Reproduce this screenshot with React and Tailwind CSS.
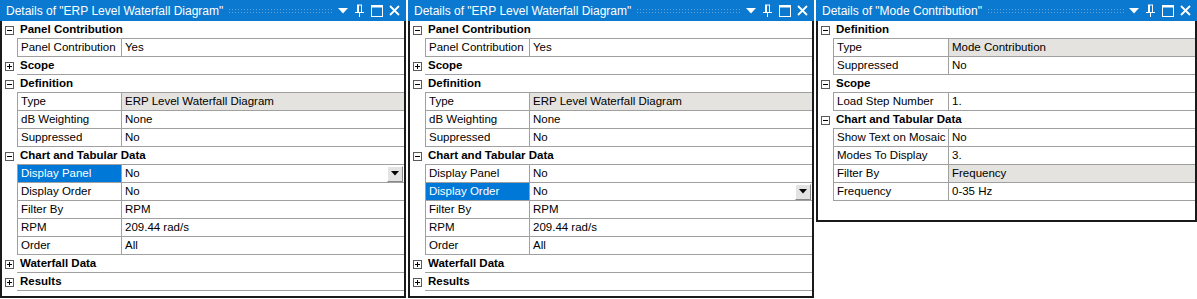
import React from 'react';

const FONT = { fontFamily: '"Liberation Sans", Arial, sans-serif' };

const panels = [
  {
    title: 'Details of "ERP Level Waterfall Diagram"',
    width: 'w-[406px]',
    height: 'h-[298px]',
    nameWidth: 'w-[105px]',
    rows: [
      { h: 'Panel Contribution', open: true },
      { n: 'Panel Contribution', v: 'Yes' },
      { h: 'Scope', open: false },
      { h: 'Definition', open: true },
      { n: 'Type', v: 'ERP Level Waterfall Diagram', gray: true },
      { n: 'dB Weighting', v: 'None' },
      { n: 'Suppressed', v: 'No' },
      { h: 'Chart and Tabular Data', open: true },
      { n: 'Display Panel', v: 'No', selected: true },
      { n: 'Display Order', v: 'No' },
      { n: 'Filter By', v: 'RPM' },
      { n: 'RPM', v: '209.44 rad/s' },
      { n: 'Order', v: 'All' },
      { h: 'Waterfall Data', open: false },
      { h: 'Results', open: false },
    ],
  },
  {
    title: 'Details of "ERP Level Waterfall Diagram"',
    width: 'w-[406px]',
    height: 'h-[298px]',
    nameWidth: 'w-[105px]',
    rows: [
      { h: 'Panel Contribution', open: true },
      { n: 'Panel Contribution', v: 'Yes' },
      { h: 'Scope', open: false },
      { h: 'Definition', open: true },
      { n: 'Type', v: 'ERP Level Waterfall Diagram', gray: true },
      { n: 'dB Weighting', v: 'None' },
      { n: 'Suppressed', v: 'No' },
      { h: 'Chart and Tabular Data', open: true },
      { n: 'Display Panel', v: 'No' },
      { n: 'Display Order', v: 'No', selected: true },
      { n: 'Filter By', v: 'RPM' },
      { n: 'RPM', v: '209.44 rad/s' },
      { n: 'Order', v: 'All' },
      { h: 'Waterfall Data', open: false },
      { h: 'Results', open: false },
    ],
  },
  {
    title: 'Details of "Mode Contribution"',
    width: 'w-[381px]',
    height: 'h-[222px]',
    nameWidth: 'w-[116px]',
    rows: [
      { h: 'Definition', open: true },
      { n: 'Type', v: 'Mode Contribution', gray: true },
      { n: 'Suppressed', v: 'No' },
      { h: 'Scope', open: true },
      { n: 'Load Step Number', v: '1.' },
      { h: 'Chart and Tabular Data', open: true },
      { n: 'Show Text on Mosaic', v: 'No' },
      { n: 'Modes To Display', v: '3.' },
      { n: 'Filter By', v: 'Frequency', gray: true },
      { n: 'Frequency', v: '0-35 Hz' },
    ],
  },
];

function ExpandBox({ open }) {
  return (
    <svg width="9" height="9" viewBox="0 0 9 9" className="block">
      <rect x="0.5" y="0.5" width="8" height="8" fill="#fff" stroke="#5a5a5a" />
      <line x1="2" y1="4.5" x2="7" y2="4.5" stroke="#000" />
      {!open && <line x1="4.5" y1="2" x2="4.5" y2="7" stroke="#000" />}
    </svg>
  );
}

function TitleIcons() {
  return (
    <div className="flex items-center gap-[6px] pr-[6px]">
      <svg width="10" height="6" viewBox="0 0 10 6">
        <path d="M0 0 H10 L5 5.5 Z" fill="#fff" />
      </svg>
      <svg width="11" height="13" viewBox="0 0 11 13">
        <path d="M3 1 H8 M3.5 1 V8 M7.5 1 V8 M4.5 1 V8 M1 8.5 H10 M5.5 8.5 V13" stroke="#fff" strokeWidth="1" fill="none" />
      </svg>
      <svg width="12" height="12" viewBox="0 0 12 12">
        <rect x="0.5" y="0.5" width="11" height="11" fill="none" stroke="#fff" />
        <line x1="0" y1="1.5" x2="12" y2="1.5" stroke="#fff" strokeWidth="2" />
      </svg>
      <svg width="11" height="11" viewBox="0 0 11 11">
        <path d="M1 1 L10 10 M10 1 L1 10" stroke="#fff" strokeWidth="1.8" />
      </svg>
    </div>
  );
}

function DropButton() {
  return (
    <div className="w-[16px] h-[16px] mr-[1px] shrink-0 flex items-center justify-center bg-[#e3e3e3] border border-t-white border-l-white border-r-[#8a8a8a] border-b-[#8a8a8a]">
      <svg width="8" height="5" viewBox="0 0 8 5">
        <path d="M0 0 H8 L4 4.5 Z" fill="#000" />
      </svg>
    </div>
  );
}

function Row({ row, nameWidth }) {
  if (row.h) {
    return (
      <div className="flex h-[18px]">
        <div className="w-[15px] shrink-0 flex items-center justify-center">
          <ExpandBox open={row.open} />
        </div>
        <div className="flex-1 border-b border-[#a0a0a0] pl-[3px] font-bold leading-[17px] text-black whitespace-nowrap">
          {row.h}
        </div>
      </div>
    );
  }
  return (
    <div className="flex h-[18px]">
      <div className="w-[15px] shrink-0" />
      <div
        className={`${nameWidth} shrink-0 border-l border-b border-r border-[#a0a0a0] pl-[3px] leading-[17px] whitespace-nowrap overflow-hidden ${
          row.selected ? 'bg-[#0078d7] text-white' : 'text-black'
        }`}
      >
        {row.n}
      </div>
      <div
        className={`flex-1 flex items-center border-b border-[#a0a0a0] pl-[3px] leading-[17px] text-black whitespace-nowrap ${
          row.gray ? 'bg-[#e5e3df]' : ''
        }`}
      >
        <span className="flex-1">{row.v}</span>
        {row.selected && <DropButton />}
      </div>
    </div>
  );
}

function Panel({ panel }) {
  return (
    <div className={`${panel.width} ${panel.height} shrink-0 flex flex-col bg-white`}>
      <div className="h-[21px] shrink-0 bg-[#0a79cf] flex items-center text-white">
        <span className="pl-[6px] pr-[5px] text-[12px] leading-[20px] whitespace-nowrap">
          {panel.title}
        </span>
        <div className="flex-1 h-[5px] mr-[4px] bg-[radial-gradient(circle,#5ea6de_0.8px,transparent_1px)] bg-[length:3px_3px]" />
        <TitleIcons />
      </div>
      <div className="flex-1 border-x-2 border-b-2 border-[#1a1a1a] text-[11.5px] overflow-hidden">
        {panel.rows.map((row, i) => (
          <Row key={i} row={row} nameWidth={panel.nameWidth} />
        ))}
      </div>
    </div>
  );
}

export default function App() {
  return (
    <div className="w-[1197px] h-[299px] bg-white flex items-start gap-[2px]" style={FONT}>
      {panels.map((p, i) => (
        <Panel key={i} panel={p} />
      ))}
    </div>
  );
}
